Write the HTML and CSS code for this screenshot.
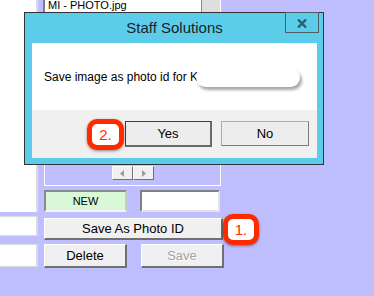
FILE: index.html
```html
<!DOCTYPE html>
<html lang="en">
<head>
    <meta charset="UTF-8">
    <title>Staff Solutions - Save As Photo ID</title>
    <link rel="stylesheet" href="styles.css">
</head>
<body>
    <div class="app">
        <!-- left column, mostly cut off -->
        <div class="left">
            <div class="left-pane"></div>
            <div class="field"></div>
            <div class="field field-b"></div>
        </div>

        <!-- photo list and actions -->
        <div class="right">
            <div class="frame">
                <div class="list">
                    <div class="list-items">
                        <div class="item">MI - PHOTO.jpg</div>
                    </div>
                    <div class="vscroll"></div>
                </div>
                <div class="hscroll">
                    <span class="arrow"><svg width="5" height="7" viewBox="0 0 5 7"><path d="M4 0 L0 3.5 L4 7 Z" fill="#9a9a9a"/></svg></span>
                    <span class="arrow"><svg width="5" height="7" viewBox="0 0 5 7"><path d="M1 0 L5 3.5 L1 7 Z" fill="#9a9a9a"/></svg></span>
                </div>
            </div>
            <div class="row row-status">
                <div class="status">NEW</div>
                <div class="box"></div>
            </div>
            <button class="btn btn-wide">Save As Photo ID</button>
            <div class="row row-actions">
                <button class="btn btn-half">Delete</button>
                <button class="btn btn-half btn-disabled">Save</button>
            </div>
        </div>
    </div>

    <!-- confirm dialog -->
    <div class="dialog">
        <div class="dialog-title">Staff Solutions</div>
        <div class="dialog-close">
            <svg width="10" height="9" viewBox="0 0 10 9"><path d="M1 0.5 L9 8.5 M9 0.5 L1 8.5" stroke="#2D5E6C" stroke-width="2.4"/></svg>
        </div>
        <div class="dialog-body">
            Save image as photo id for Ki
            <div class="redact"></div>
        </div>
        <div class="dialog-footer">
            <button class="dlg-btn dlg-default">Yes</button>
            <button class="dlg-btn">No</button>
        </div>
    </div>

    <div class="badge badge-1">1.</div>
    <div class="badge badge-2">2.</div>
</body>
</html>
```

FILE: styles.css
```css
body {
    margin: 0;
    background-color: #BFBFFF; /* lavender form */
    font-family: "Liberation Sans", Arial, sans-serif;
    color: #000;
    width: 374px;
    height: 296px;
    overflow: hidden;
    position: relative;
}
.app {
    display: flex;
    gap: 6px;
}

/* left column */
.left {
    width: 38px;
    display: flex;
    flex-direction: column;
}
.left-pane {
    height: 212px;
    background-color: #FFFFFF;
    border-right: 2px solid #DCDCDC;
    box-sizing: border-box;
}
.field {
    height: 20px;
    margin-top: 4px;
    background-color: #FFFFFF;
    border: 1px solid #DADADA;
    border-left: none;
    border-right-width: 2px;
    box-sizing: border-box;
}
.field-b {
    height: 23px;
    margin-top: 8px;
}

/* right column */
.right {
    width: 180px;
    display: flex;
    flex-direction: column;
}
.frame {
    width: 177px;
    height: 186px;
    border: 1px solid #FFFFFF;
    border-top: none;
    box-sizing: border-box;
    display: flex;
    flex-direction: column;
}
.list {
    height: 164px;
    display: flex;
    margin-left: -2px;
}
.list-items {
    flex: 1;
    background-color: #FFFFFF;
    border-left: 2px solid #808080;
    padding-left: 3px;
}
.item {
    font-size: 11px;
    line-height: 12px;
    margin-top: -1px;
}
.vscroll {
    width: 18px;
    background-color: #DEDEDE;
    border-left: 1px solid #8A8A8A;
}
.hscroll {
    display: flex;
    padding: 2px 0 0 67px;
}
.arrow {
    width: 21px;
    height: 14px;
    display: flex;
    align-items: center;
    justify-content: center;
    background-color: #F0F0F0;
    border: 1px solid #FFFFFF;
    border-right-color: #707070;
    border-bottom-color: #707070;
    box-sizing: border-box;
}
.row {
    display: flex;
}
.row-status {
    margin-top: 4px;
    height: 22px;
    gap: 13px;
}
.status {
    width: 83px;
    display: flex;
    align-items: center;
    justify-content: center;
    font-size: 11px;
    background-color: #D8F8D8; /* pale green dither */
    border: 2px solid #8A8A8A;
    border-right-color: #C8C8C8;
    border-bottom-color: #F4F4F4;
    box-sizing: border-box;
}
.box {
    width: 80px;
    background-color: #FFFFFF;
    border: 2px solid #808080;
    border-right-color: #E4E4E4;
    border-bottom-color: #E4E4E4;
    box-sizing: border-box;
}
.btn {
    font-family: "Liberation Sans", Arial, sans-serif;
    font-size: 13px;
    color: #000;
    background-color: #F0F0F0;
    border-style: solid;
    border-width: 1px 2px 2px 1px;
    border-color: #FFFFFF #707070 #707070 #FFFFFF;
    padding: 0;
    box-sizing: border-box;
}
.btn-wide {
    margin-top: 6px;
    width: 179px;
    height: 22px;
}
.row-actions {
    margin-top: 4px;
    gap: 14px;
}
.btn-half {
    width: 83px;
    height: 24px;
}
.btn-disabled {
    color: #A3A3A3;
    text-shadow: 1px 1px 0 #FFFFFF;
}

/* dialog */
.dialog {
    position: absolute;
    left: 24px;
    top: 12px;
    width: 300px;
    height: 153px;
    box-sizing: border-box;
    border: 1px solid #333333;
    background-color: #5BCDEA; /* cyan frame */
    padding: 0 6px 6px 7px;
    display: flex;
    flex-direction: column;
}
.dialog-title {
    height: 30px;
    line-height: 30px;
    text-align: center;
    font-size: 15px;
    color: #1E1E1E;
}
.dialog-close {
    position: absolute;
    top: -1px;
    right: 4px;
    width: 34px;
    height: 21px;
    box-sizing: border-box;
    border: 1px solid #4E5D61;
    display: flex;
    align-items: center;
    justify-content: center;
    padding-top: 1px;
}
.dialog-body {
    position: relative;
    height: 67px;
    box-sizing: border-box;
    background-color: #FFFFFF;
    font-size: 12px;
    line-height: 14px;
    padding: 27px 0 0 12px;
    color: #000;
}
.redact {
    position: absolute;
    left: 164px;
    top: 25px;
    width: 104px;
    height: 19px;
    border-radius: 10px;
    background-color: #FFFFFF;
    box-shadow: 2px 3px 3px rgba(0,0,0,0.35);
}
.dialog-footer {
    flex: 1;
    background-color: #F0F0F0;
    display: flex;
    justify-content: flex-end;
    align-items: flex-start;
    gap: 9px;
    padding: 11px 8px 0 0;
}
.dlg-btn {
    width: 88px;
    height: 25px;
    font-family: "Liberation Sans", Arial, sans-serif;
    font-size: 13px;
    color: #000;
    background-color: #EDEDED;
    border: 1px solid #ADADAD;
    border-right-color: #7A7A7A;
    border-bottom-color: #7A7A7A;
    padding: 0;
}
.dlg-default {
    width: 87px;
    height: 26px;
    border: 1px solid #3C3C3C;
    border-right-width: 2px;
    border-bottom-width: 2px;
    border-right-color: #6A6A6A;
    border-bottom-color: #6A6A6A;
}

/* red step badges */
.badge {
    position: absolute;
    width: 37px;
    height: 31px;
    box-sizing: border-box;
    border: 5px solid #FF2A00;
    border-radius: 10px;
    background-color: #FFFFFF;
    box-shadow: 0 1px 3px rgba(0,0,0,0.45);
    color: #FF2A00;
    font-size: 15px;
    line-height: 21px;
    text-align: center;
}
.badge-1 {
    left: 223px;
    top: 214px;
    width: 36px;
}
.badge-2 {
    left: 87px;
    top: 119px;
}
```
